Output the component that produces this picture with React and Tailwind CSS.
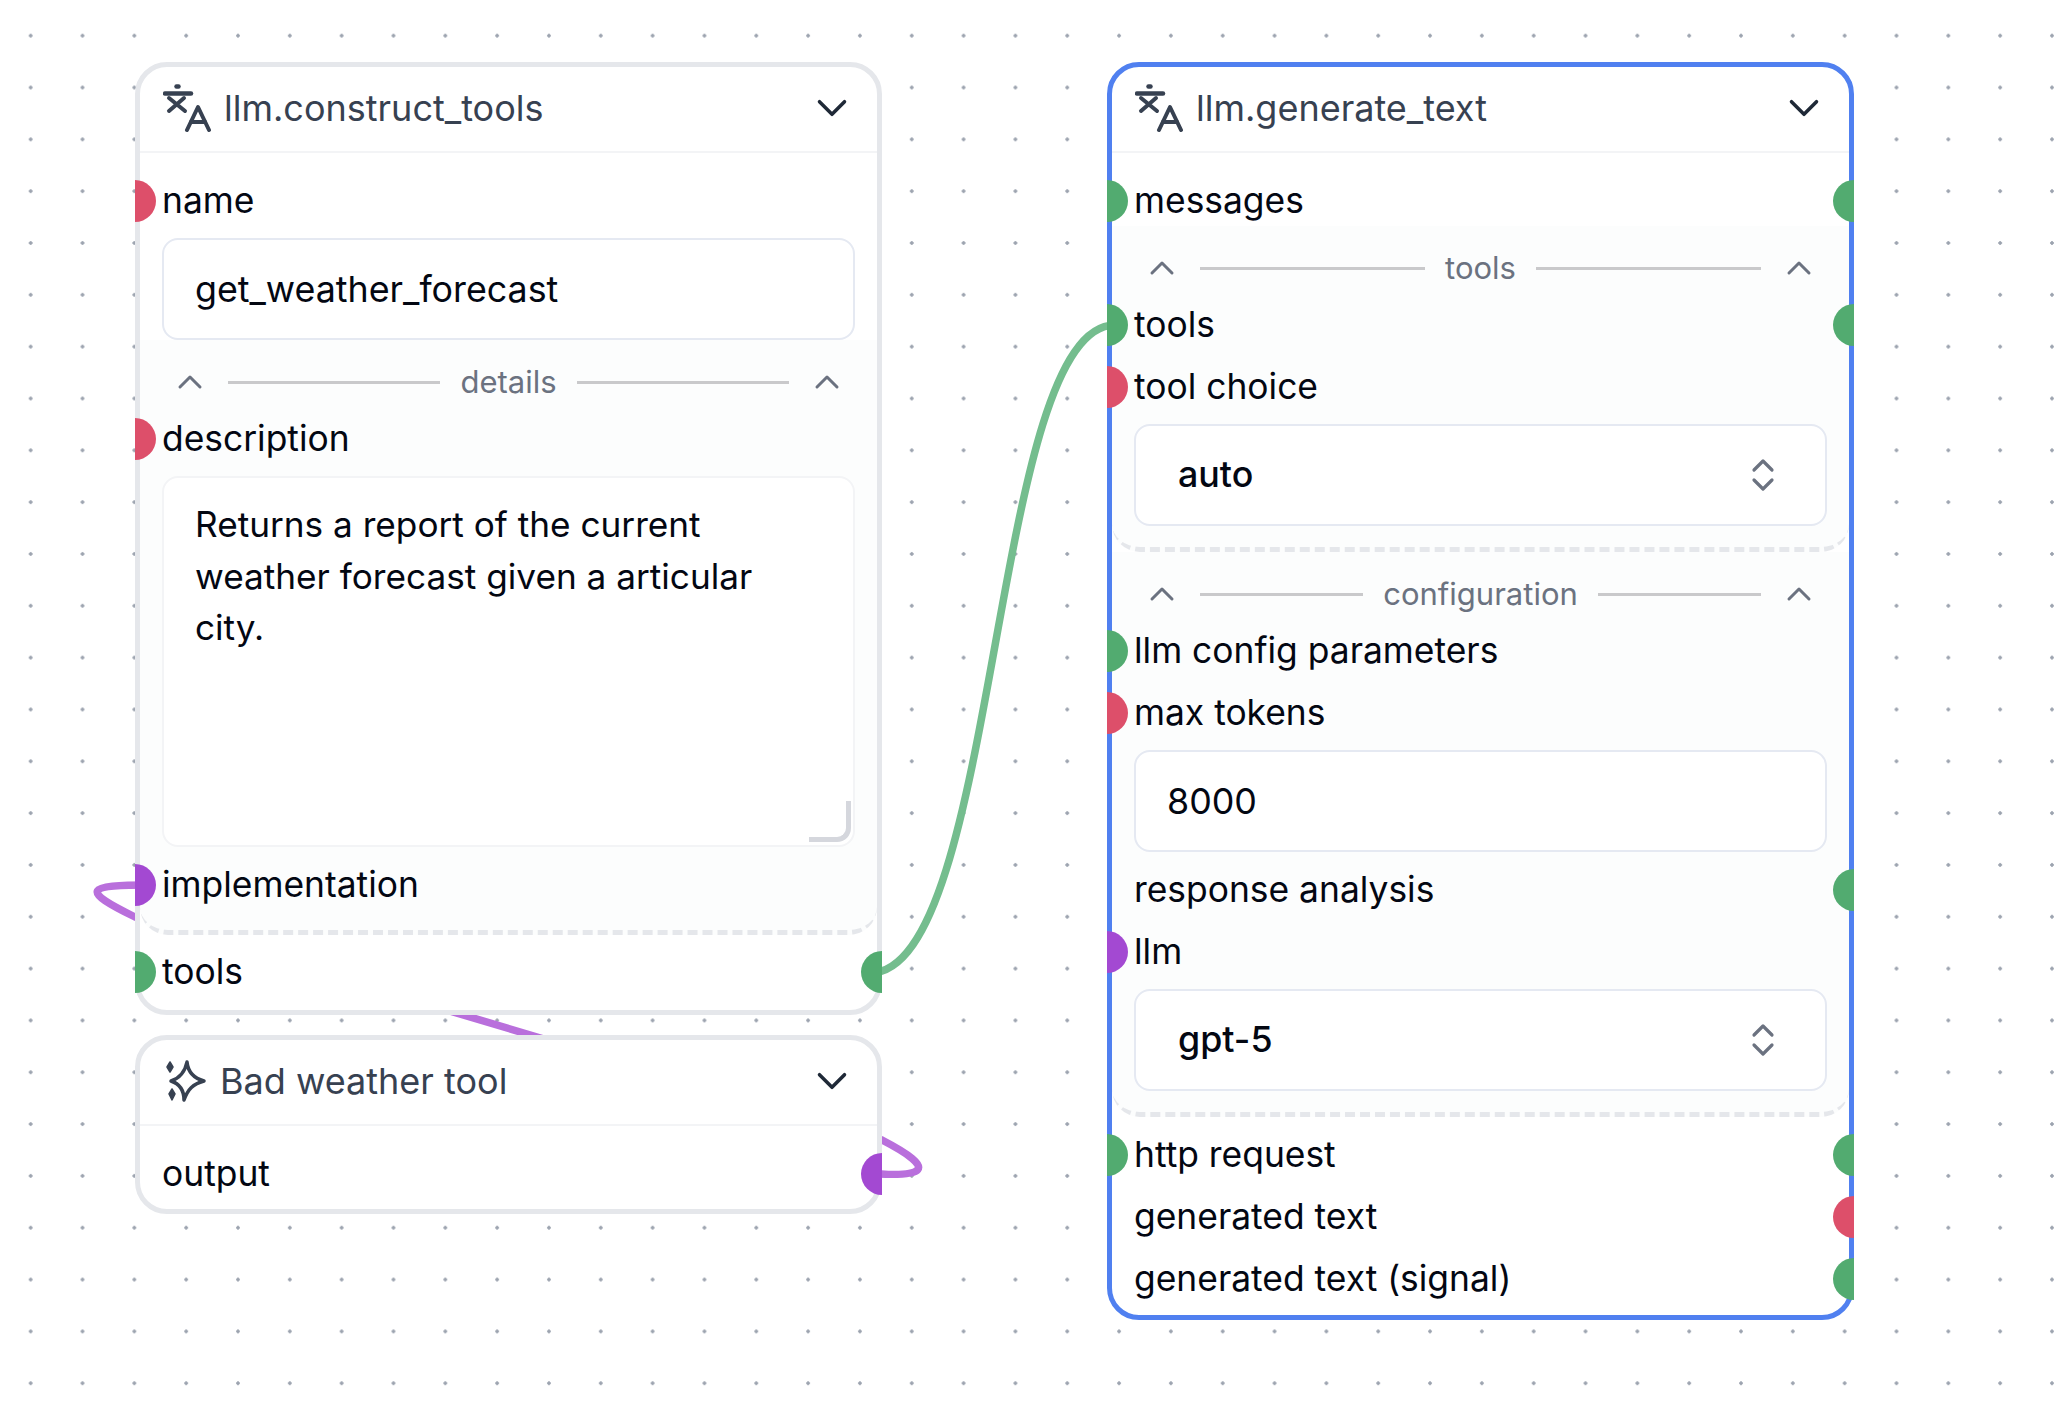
import { ChevronDown, ChevronUp } from "lucide-react";

const GREEN = "bg-[#52ab70]";
const RED = "bg-[#dd4f6a]";
const PURPLE = "bg-[#a349d2]";

function Handle({ side, color }) {
  if (side === "left") {
    return <span className={`absolute -left-[27px] top-1/2 h-[42px] w-[21px] -translate-y-1/2 rounded-r-full ${color}`} />;
  }
  return <span className={`absolute -right-[27px] top-1/2 h-[42px] w-[21px] -translate-y-1/2 rounded-l-full ${color}`} />;
}

function Row({ label, left, right }) {
  return (
    <div className="relative flex h-[62px] items-center text-[35.400px] text-[#030712]">
      {left && <Handle side="left" color={left} />}
      <span className="-mt-[1px]">{label}</span>
      {right && <Handle side="right" color={right} />}
    </div>
  );
}

function LanguageIcon() {
  return (
    <svg width="48" height="48" viewBox="0 0 48 48" fill="none" stroke="#374151" strokeWidth="4" strokeLinecap="round" strokeLinejoin="round">
      <path d="M2 9.500H28" strokeWidth="4.500" />
      <path d="M13.500 2.500H15.500" strokeWidth="4.500" />
      <path d="M6 14L22 27M21 14L6 27" />
      <path d="M24 46L35 23L46 46" />
      <path d="M28 38H42" />
    </svg>
  );
}

function SparkleIcon() {
  return (
    <svg width="44" height="44" viewBox="0 0 44 44" fill="none" stroke="#374151" strokeWidth="3.500" strokeLinejoin="round">
      <path d="M24 3C25 13 30 19 41 22C30 25 25 30 21 41C21 31 17 25 8 22C17 19 22 13 24 3Z" />
      <path d="M7 3L10 8L7 13L4 8Z" fill="#374151" strokeWidth="1.500" />
      <path d="M9 30L12 35L9 41L6 35Z" fill="#374151" strokeWidth="1.500" />
    </svg>
  );
}

function Header({ icon, title }) {
  return (
    <div className="flex h-[86px] items-center justify-between border-b-2 border-[#f3f4f6] pb-[2px] pl-[23px] pr-[20px]">
      <div className="flex items-center gap-[14px] text-[36px] text-[#374151]">
        {icon}
        <span className="-ml-[1px]">{title}</span>
      </div>
      <ChevronDown size={50} strokeWidth={1.700} color="#1f2937" />
    </div>
  );
}

function Divider({ label }) {
  return (
    <div className="flex h-[52px] items-center gap-[10px]">
      <div className="flex w-[56px] justify-center">
        <ChevronUp size={40} strokeWidth={1.800} color="#6b7280" />
      </div>
      <div className="h-[3px] flex-1 bg-[#c9c9cb]" />
      <span className="px-[10px] text-[31px] text-[#6b7280]">{label}</span>
      <div className="h-[3px] flex-1 bg-[#c9c9cb]" />
      <div className="flex w-[56px] justify-center">
        <ChevronUp size={40} strokeWidth={1.800} color="#6b7280" />
      </div>
    </div>
  );
}

function TextInput({ value }) {
  return (
    <div className="mt-[6px] flex h-[102px] items-center rounded-[16px] border-2 border-[#e5e9f2] bg-white pl-[31px] pt-[2px] text-[35.800px] text-[#030712]">
      {value}
    </div>
  );
}

function SelectBox({ value }) {
  return (
    <div className="mt-[6px] flex h-[102px] items-center justify-between rounded-[16px] border-2 border-[#e5e9f2] bg-white pl-[42px] pr-[50px] text-[35.800px] font-medium text-[#030712]">
      <span>{value}</span>
      <svg width="24" height="34" viewBox="0 0 24 34" fill="none" stroke="#6b7280" strokeWidth="3.200" strokeLinecap="round" strokeLinejoin="round">
        <path d="M3 12L12 3L21 12" />
        <path d="M3 22L12 31L21 22" />
      </svg>
    </div>
  );
}

function Section({ children, className = "" }) {
  return (
    <div className={`-mx-[22px] rounded-b-[28px] border-b-[5px] border-dashed border-[#e5e7eb] bg-[#fcfdfd] px-[22px] pt-[16px] ${className}`}>
      {children}
    </div>
  );
}

function ConstructToolsNode() {
  return (
    <div className="absolute left-[135px] top-[62px] z-10 w-[747px] rounded-[32px] border-[5px] border-[#e5e7eb] bg-white">
      <Header icon={<LanguageIcon />} title="llm.construct_tools" />
      <div className="px-[22px] pb-[7px] pt-[17px]">
        <Row label="name" left={RED} />
        <TextInput value="get_weather_forecast" />
        <Section className="pb-[14px]">
          <Divider label="details" />
          <Row label="description" left={RED} />
          <div className="relative mt-[6px] h-[371px] rounded-[16px] border-2 border-[#f3f4f6] bg-white pl-[31px] pr-[40px] pt-[21px] text-[35.200px] leading-[51.600px] text-[#030712]">
            Returns a report of the current weather forecast given a articular city.
            <div className="absolute bottom-[3px] right-[2px] h-[41px] w-[42px] rounded-br-[14px] border-b-[5px] border-r-[5px] border-[#d5d7dd]" />
          </div>
          <div className="mt-[7px]">
            <Row label="implementation" left={PURPLE} />
          </div>
        </Section>
        <div className="mt-[6px]">
          <Row label="tools" left={GREEN} right={GREEN} />
        </div>
      </div>
    </div>
  );
}

function BadWeatherNode() {
  return (
    <div className="absolute left-[135px] top-[1035px] z-10 w-[747px] rounded-[32px] border-[5px] border-[#e5e7eb] bg-white">
      <Header icon={<SparkleIcon />} title="Bad weather tool" />
      <div className="px-[22px] pb-[4px] pt-[17px]">
        <Row label="output" right={PURPLE} />
      </div>
    </div>
  );
}

function GenerateTextNode() {
  return (
    <div className="absolute left-[1107px] top-[62px] z-10 w-[747px] rounded-[32px] border-[5px] border-[#5080f0] bg-white">
      <Header icon={<LanguageIcon />} title="llm.generate_text" />
      <div className="px-[22px] pb-[5px] pt-[17px]">
        <Row label="messages" left={GREEN} right={GREEN} />
        <Section className="-mt-[6px] pb-[21px]">
          <Divider label="tools" />
          <Row label="tools" left={GREEN} right={GREEN} />
          <Row label="tool choice" left={RED} />
          <SelectBox value="auto" />
        </Section>
        <Section className="pb-[21px]">
          <Divider label="configuration" />
          <Row label="llm config parameters" left={GREEN} />
          <Row label="max tokens" left={RED} />
          <TextInput value="8000" />
          <div className="mt-[7px]">
            <Row label="response analysis" right={GREEN} />
          </div>
          <Row label="llm" left={PURPLE} />
          <SelectBox value="gpt-5" />
        </Section>
        <div className="mt-[7px]">
          <Row label="http request" left={GREEN} right={GREEN} />
          <Row label="generated text" right={RED} />
          <Row label="generated text (signal)" right={GREEN} />
        </div>
      </div>
    </div>
  );
}

function Edges() {
  return (
    <svg className="absolute inset-0" width="2068" height="1406" fill="none" strokeWidth="7.500">
      <path d="M870 973C1000 973 990 325 1115 325" stroke="#74bd8e" />
      <path d="M865 1173C925 1178 940 1170 882 1140L135 917C80 890 85 885 150 885" stroke="#b96fdc" />
    </svg>
  );
}

export default function App() {
  return (
    <div className="relative h-[1406px] w-[2068px] overflow-hidden bg-white bg-[radial-gradient(circle,#9ca3af_1.500px,transparent_2px)] bg-size-[51.840px_51.840px] bg-position-[4.780px_9.780px] font-['Inter',sans-serif]">
      <Edges />
      <ConstructToolsNode />
      <BadWeatherNode />
      <GenerateTextNode />
    </div>
  );
}
